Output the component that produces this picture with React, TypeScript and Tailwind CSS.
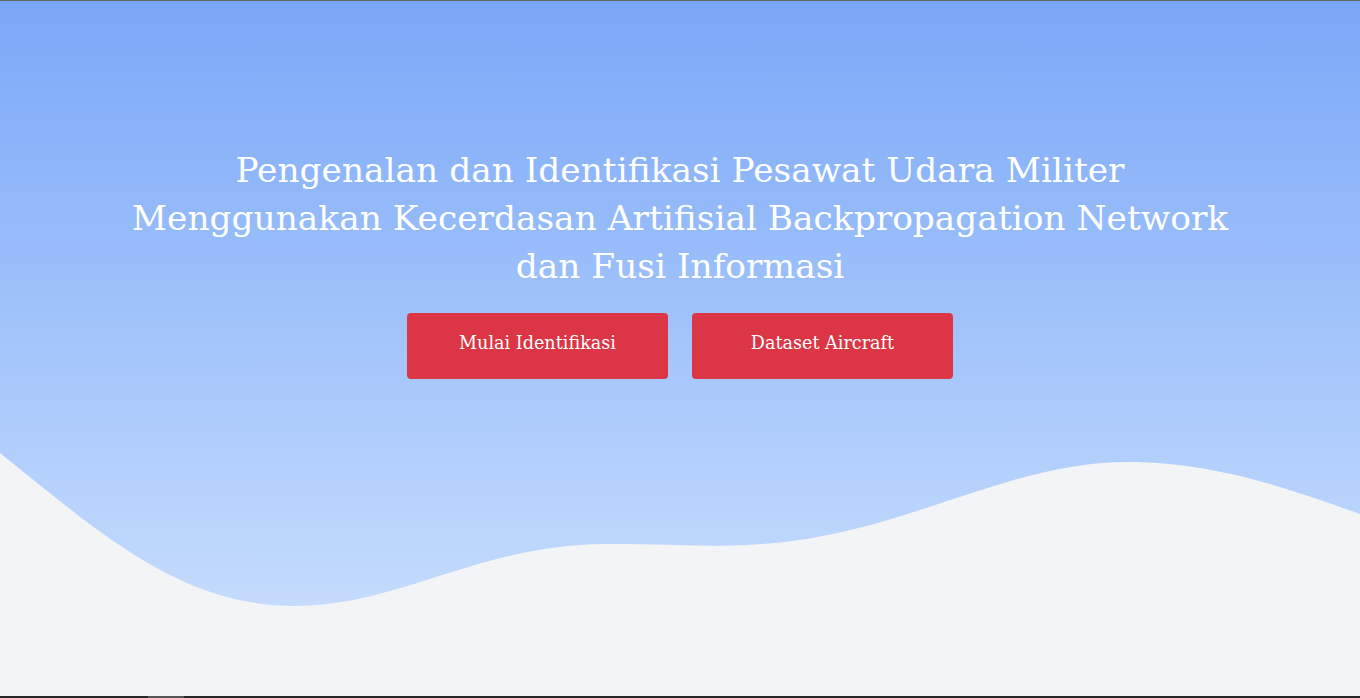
import React from 'react';

const App: React.FC = () => {
  return (
    <div className="h-[698px] w-full overflow-hidden flex flex-col bg-linear-to-b from-[#7aa7f7] to-[#d0e3fd] border-t border-[#666666] font-['DejaVu_Serif',serif]">
      {/* Hero content */}
      <div className="flex flex-col items-center pt-[145px]">
        <h1 className="text-white text-center text-[34.4px] leading-[48px] font-normal">
          Pengenalan dan Identifikasi Pesawat Udara Militer
          <br />
          Menggunakan Kecerdasan Artifisial Backpropagation Network
          <br />
          dan Fusi Informasi
        </h1>
        <div className="flex gap-6 mt-[23px]">
          <button className="w-[261px] h-[66px] rounded bg-[#dc3545] text-white text-[17.6px] pb-[6px]">
            Mulai Identifikasi
          </button>
          <button className="w-[261px] h-[66px] rounded bg-[#dc3545] text-white text-[17.6px] pb-[6px]">
            Dataset Aircraft
          </button>
        </div>
      </div>

      {/* Wave */}
      <svg className="block w-full h-[243px] mt-auto" viewBox="0 0 1360 243" preserveAspectRatio="none">
        <path
          d="M0,0 C100,80 180,153 295,153 C400,153 480,91 607,91 C680,91 700,94 746,92 C900,86 1000,9 1128,9 C1220,9 1300,40 1360,61 L1360,243 L0,243 Z"
          fill="#f3f4f6"
        />
      </svg>

      {/* Bottom scrollbar strip */}
      <div className="h-[2px] bg-[#262626] flex">
        <div className="ml-[148px] w-[36px] bg-[#555555]" />
      </div>
    </div>
  );
};

export default App;
